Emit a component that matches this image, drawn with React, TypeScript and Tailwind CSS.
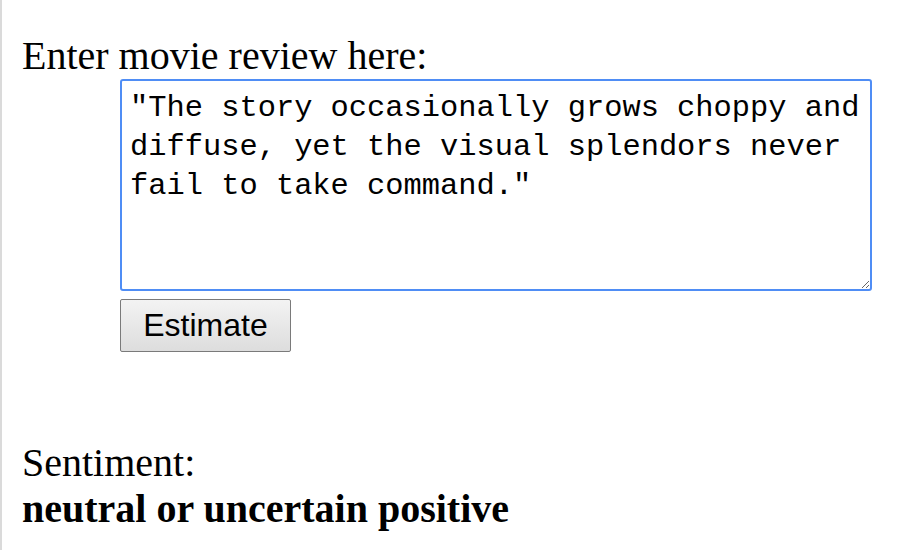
import React, { useState } from 'react';

const App: React.FC = () => {
  const [review, setReview] = useState(
    '"The story occasionally grows choppy and diffuse, yet the visual splendors never fail to take command."'
  );

  return (
    <div className="min-h-[550px] w-full border-l-2 border-[#dadada] bg-white pl-[20px] pt-[33px] font-['Liberation_Serif',serif] text-[40px] leading-[46px] text-black">
      <p>Enter movie review here:</p>

      <div className="ml-[98px] flex flex-col items-start">
        <textarea
          value={review}
          onChange={(e) => setReview(e.target.value)}
          autoFocus
          className="block h-[212px] w-[752px] rounded-[3px] border-2 border-[#4f8df5] bg-white px-[8px] pt-[8px] font-['Liberation_Mono',monospace] text-[30.4px] leading-[39px] text-black outline-none"
        />
        <button
          type="button"
          className="mt-[8px] h-[53px] w-[171px] rounded-[2px] border border-[#7a7a7a] bg-gradient-to-b from-[#f3f3f3] to-[#dddddd] pb-[2px] font-['Liberation_Sans',sans-serif] text-[32px] leading-none text-black"
        >
          Estimate
        </button>
      </div>

      <div className="mt-[88px]">
        <p>Sentiment:</p>
        <p className="font-bold">neutral or uncertain positive</p>
      </div>
    </div>
  );
};

export default App;
